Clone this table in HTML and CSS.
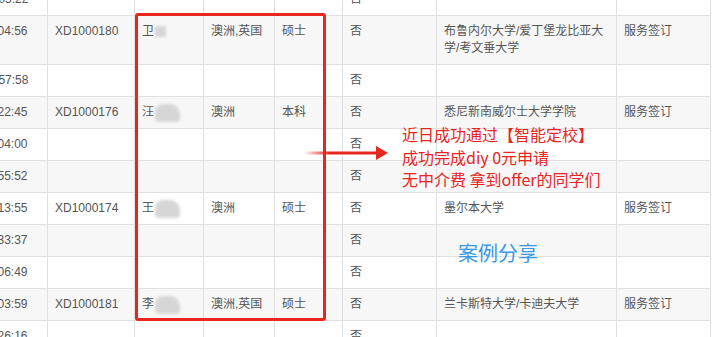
FILE: index.html
```html
<!DOCTYPE html>
<html lang="zh-CN">
<head>
<meta charset="utf-8">
<title>案例分享</title>
<link rel="stylesheet" href="styles.css">
</head>
<body>
<div class="stage">
  <table class="grid">
    <colgroup>
      <col class="c-time"><col class="c-id"><col class="c-name"><col class="c-country"><col class="c-degree"><col class="c-flag"><col class="c-uni"><col class="c-status">
    </colgroup>
    <tbody>
      <tr><td>2019-06-12 10:05:22</td><td></td><td></td><td></td><td></td><td>否</td><td></td><td></td></tr>
      <tr><td>2019-06-12 11:04:56</td><td>XD1000180</td><td>卫<span class="blur b-small"></span></td><td>澳洲,英国</td><td>硕士</td><td>否</td><td>布鲁内尔大学/爱丁堡龙比亚大学/考文垂大学</td><td>服务签订</td></tr>
      <tr><td>2019-06-12 09:57:58</td><td></td><td></td><td></td><td></td><td>否</td><td></td><td></td></tr>
      <tr><td>2019-06-11 22:22:45</td><td>XD1000176</td><td>汪<span class="blur b-cloud"></span></td><td>澳洲</td><td>本科</td><td>否</td><td>悉尼新南威尔士大学学院</td><td>服务签订</td></tr>
      <tr><td>2019-06-11 21:04:00</td><td></td><td></td><td></td><td></td><td>否</td><td></td><td></td></tr>
      <tr><td>2019-06-11 20:55:52</td><td></td><td></td><td></td><td></td><td>否</td><td></td><td></td></tr>
      <tr><td>2019-06-11 19:13:55</td><td>XD1000174</td><td>王<span class="blur b-cloud"></span></td><td>澳洲</td><td>硕士</td><td>否</td><td>墨尔本大学</td><td>服务签订</td></tr>
      <tr><td>2019-06-11 18:33:37</td><td></td><td></td><td></td><td></td><td>否</td><td></td><td></td></tr>
      <tr><td>2019-06-11 17:06:49</td><td></td><td></td><td></td><td></td><td>否</td><td></td><td></td></tr>
      <tr><td>2019-06-11 16:03:59</td><td>XD1000181</td><td>李<span class="blur b-cloud"></span></td><td>澳洲,英国</td><td>硕士</td><td>否</td><td>兰卡斯特大学/卡迪夫大学</td><td>服务签订</td></tr>
      <tr><td>2019-06-11 15:26:16</td><td></td><td></td><td></td><td></td><td>否</td><td></td><td></td></tr>
    </tbody>
  </table>

  <div class="highlight-box"></div>
  <svg class="arrow" width="86" height="16" viewBox="0 0 86 16" aria-hidden="true">
    <defs>
      <linearGradient id="fade" x1="0" y1="0" x2="1" y2="0">
        <stop offset="0" stop-color="#e8251f" stop-opacity="0"/>
        <stop offset="0.35" stop-color="#e8251f" stop-opacity="1"/>
      </linearGradient>
    </defs>
    <rect x="0" y="6.5" width="74" height="3" fill="url(#fade)"/>
    <polygon points="72,1 84,8 72,15" fill="#e8251f"/>
  </svg>
  <div class="note">
    <p>近日成功通过【智能定校】</p>
    <p>成功完成diy 0元申请</p>
    <p>无中介费 拿到offer的同学们</p>
  </div>
  <div class="share">案例分享</div>
</div>
</body>
</html>
```

FILE: styles.css
```css
html, body {
  margin: 0;
  padding: 0;
  background: #ffffff;
  overflow: hidden;
}

.stage {
  position: relative;
  width: 723px;
  height: 337px;
  overflow: hidden;
}

.grid {
  border-collapse: collapse;
  table-layout: fixed;
  margin-top: -17px;
  margin-left: -91px;
  font-family: "Liberation Sans", "Noto Sans CJK SC", sans-serif;
  font-size: 12px;
  color: #555555;
}

.c-time { width: 138px; }
.c-id { width: 87px; }
.c-name { width: 69px; }
.c-country { width: 71px; }
.c-degree { width: 68px; }
.c-flag { width: 94px; }
.c-uni { width: 180px; }
.c-status { width: 94px; }

.grid td {
  border: 1px solid #e0e0e0;
  padding: 7px 7px;
  line-height: 17px;
  vertical-align: top;
  white-space: normal;
  word-break: break-all;
}

.grid td:first-child {
  white-space: nowrap;
  overflow: hidden;
}

.grid tr:nth-child(even) td {
  background: #f7f7f7;
}

.blur {
  display: inline-block;
  background: #d6d6d6;
  filter: blur(1.5px);
  vertical-align: middle;
}

.b-small {
  width: 11px;
  height: 11px;
  margin-left: 1px;
}

.b-cloud {
  width: 25px;
  height: 18px;
  margin: -4px 0 -4px 1px;
  border-radius: 8px 10px 4px 4px;
}

.highlight-box {
  position: absolute;
  left: 135px;
  top: 13px;
  width: 185px;
  height: 302px;
  border: 3px solid #e8251f;
  border-radius: 3px;
}

.arrow {
  position: absolute;
  left: 304px;
  top: 145px;
}

.note {
  position: absolute;
  left: 402px;
  top: 123px;
  font-family: "Noto Sans CJK SC", sans-serif;
  font-size: 16px;
  line-height: 22.5px;
  color: #e8251f;
}

.note p {
  margin: 0;
  white-space: nowrap;
}

.share {
  position: absolute;
  left: 458px;
  top: 240px;
  font-family: "Noto Sans CJK SC", sans-serif;
  font-size: 20px;
  line-height: 26px;
  color: #3a98e6;
}
```
